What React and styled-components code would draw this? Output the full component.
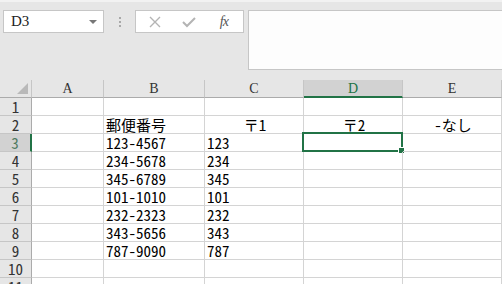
import React from "react";
import styled, { createGlobalStyle } from "styled-components";

const GlobalStyle = createGlobalStyle`
  html, body {
    margin: 0;
    padding: 0;
    background: #e6e6e6;
    overflow: hidden;
  }
`;

const GREEN = "#217346";
const CELL_FONT = `"Noto Sans CJK JP", "Liberation Mono", monospace`;

const columns = ["A", "B", "C", "D", "E"];
const rows = [
  ["", "", "", "", ""],
  ["", "郵便番号", "〒1", "〒2", "-なし"],
  ["", "123-4567", "123", "", ""],
  ["", "234-5678", "234", "", ""],
  ["", "345-6789", "345", "", ""],
  ["", "101-1010", "101", "", ""],
  ["", "232-2323", "232", "", ""],
  ["", "343-5656", "343", "", ""],
  ["", "787-9090", "787", "", ""],
  ["", "", "", "", ""],
  ["", "", "", "", ""],
];

function App() {
  return (
    <>
      <GlobalStyle />
      <Window>
        <TopBar>
          <NameBox>
            <span>D3</span>
            <DropArrow />
          </NameBox>
          <Grip>
            <i />
            <i />
            <i />
          </Grip>
          <FxGroup>
            <FxButton>
              <svg width="12" height="12" viewBox="0 0 12 12">
                <path d="M1 1 L11 11 M11 1 L1 11" stroke="#b4b4b4" strokeWidth="1.4" fill="none" />
              </svg>
            </FxButton>
            <FxButton>
              <svg width="14" height="12" viewBox="0 0 14 12">
                <path d="M1 6 L5 10 L13 2" stroke="#b4b4b4" strokeWidth="2" fill="none" />
              </svg>
            </FxButton>
            <FxButton>
              <FxLabel>fx</FxLabel>
            </FxButton>
          </FxGroup>
          <FormulaInput />
        </TopBar>

        <Sheet>
          <Corner>
            <svg width="11" height="11" viewBox="0 0 11 11">
              <path d="M11 0 L11 11 L0 11 Z" fill="#b9b9b9" />
            </svg>
          </Corner>
          {columns.map((c) => (
            <ColHead key={c} $sel={c === "D"}>
              {c}
            </ColHead>
          ))}
          {rows.map((r, i) => (
            <React.Fragment key={i}>
              <RowHead $sel={i === 2}>{i + 1}</RowHead>
              {r.map((v, j) => (
                <Cell key={j} $center={i === 1 && j > 1}>
                  {v}
                  {i === 2 && j === 3 && (
                    <Selection>
                      <Handle />
                    </Selection>
                  )}
                </Cell>
              ))}
            </React.Fragment>
          ))}
        </Sheet>
      </Window>
    </>
  );
}

export default App;

const Window = styled.div`
  width: 502px;
  height: 284px;
  overflow: hidden;
  background: #e6e6e6;
  border-top: 2px solid #f2f2f2;
  box-sizing: border-box;
`;

const TopBar = styled.div`
  display: flex;
  align-items: flex-start;
  height: 78px;
  padding: 8px 0 0 3px;
  box-sizing: border-box;
`;

const NameBox = styled.div`
  width: 101px;
  height: 23px;
  box-sizing: border-box;
  background: #fff;
  border: 1px solid #c6c6c6;
  display: flex;
  align-items: center;
  justify-content: space-between;
  padding: 0 6px 0 7px;
  font-family: "Liberation Serif", serif;
  font-size: 15px;
  color: #222;
`;

const DropArrow = styled.span`
  width: 0;
  height: 0;
  border-left: 4px solid transparent;
  border-right: 4px solid transparent;
  border-top: 4px solid #777;
`;

const Grip = styled.div`
  width: 31px;
  height: 23px;
  display: flex;
  flex-direction: column;
  align-items: center;
  justify-content: center;
  gap: 2px;

  i {
    width: 2px;
    height: 2px;
    background: #a8a8a8;
  }
`;

const FxGroup = styled.div`
  width: 109px;
  height: 23px;
  box-sizing: border-box;
  background: #fff;
  border: 1px solid #c6c6c6;
  display: grid;
  grid-template-columns: repeat(3, 1fr);
  align-items: center;
  justify-items: center;
  padding: 0 2px;
`;

const FxButton = styled.div`
  display: flex;
  align-items: center;
  justify-content: center;
  height: 100%;
`;

const FxLabel = styled.span`
  font-family: "Liberation Serif", serif;
  font-style: italic;
  font-size: 14px;
  color: #555;
  letter-spacing: -1px;
`;

const FormulaInput = styled.div`
  flex: 1;
  margin-left: 4px;
  height: 60px;
  box-sizing: border-box;
  background: #fdfdfd;
  border: 1px solid #c6c6c6;
  border-right: none;
`;

const Sheet = styled.div`
  display: grid;
  grid-template-columns: 32px 72px 101px 99px 99px 99px;
  grid-auto-rows: 18px;
  background: #fff;
`;

const Corner = styled.div`
  background: #e6e6e6;
  border-right: 1px solid #c6c6c6;
  border-bottom: 1px solid #ababab;
  box-sizing: border-box;
  display: flex;
  align-items: flex-end;
  justify-content: flex-end;
  padding: 0 3px 3px 0;
`;

const ColHead = styled.div`
  box-sizing: border-box;
  background: ${(p) => (p.$sel ? "#d2d2d2" : "#e6e6e6")};
  border-right: 1px solid #c6c6c6;
  border-bottom: ${(p) => (p.$sel ? `2px solid ${GREEN}` : "1px solid #ababab")};
  color: ${(p) => (p.$sel ? GREEN : "#333")};
  font-family: "Liberation Serif", serif;
  font-size: 14px;
  line-height: 18px;
  text-align: center;
`;

const RowHead = styled.div`
  box-sizing: border-box;
  background: ${(p) => (p.$sel ? "#d2d2d2" : "#e6e6e6")};
  border-right: ${(p) => (p.$sel ? `2px solid ${GREEN}` : "1px solid #ababab")};
  border-bottom: 1px solid #c6c6c6;
  color: ${(p) => (p.$sel ? "#4f7a60" : "#333")};
  font-family: ${CELL_FONT};
  font-feature-settings: "hwid";
  font-size: 15px;
  line-height: 17px;
  text-align: center;
`;

const Cell = styled.div`
  position: relative;
  box-sizing: border-box;
  border-right: 1px solid #d4d4d4;
  border-bottom: 1px solid #d4d4d4;
  font-family: ${CELL_FONT};
  font-feature-settings: "hwid";
  font-size: 15px;
  line-height: 17px;
  color: #000;
  padding-left: 2px;
  white-space: nowrap;
  text-align: ${(p) => (p.$center ? "center" : "left")};
`;

const Selection = styled.div`
  position: absolute;
  left: -2px;
  top: -2px;
  right: -1px;
  bottom: -1px;
  border: 2px solid ${GREEN};
`;

const Handle = styled.div`
  position: absolute;
  right: -4px;
  bottom: -4px;
  width: 5px;
  height: 5px;
  background: ${GREEN};
  border: 1px solid #fff;
`;
